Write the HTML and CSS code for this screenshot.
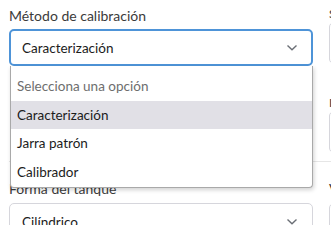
FILE: index.html
```html
<!DOCTYPE html>
<html lang="es">
<head>
  <meta charset="UTF-8">
  <meta name="viewport" content="width=device-width, initial-scale=1.0">
  <title>Calibración de tanque</title>
  <link rel="stylesheet" href="styles.css">
</head>
<body>
  <div class="form">
    <!-- Método -->
    <div class="form-row first">
      <div class="field">
        <label class="field-label">Método de calibración</label>
        <div class="select focused">
          <span class="select-value">Caracterización</span>
          <svg class="chevron" width="12" height="8" viewBox="0 0 12 8"><path d="M1.5 1.5 L6 5.8 L10.5 1.5" fill="none" stroke="#6b6f76" stroke-width="1.4"/></svg>
        </div>
        <ul class="dropdown">
          <li class="option placeholder">Selecciona una opción</li>
          <li class="option selected">Caracterización</li>
          <li class="option">Jarra patrón</li>
          <li class="option">Calibrador</li>
        </ul>
      </div>
      <div class="side">
        <div class="field small">
          <label class="field-label">Sensor de nivel</label>
          <div class="select tall"><span class="select-value">Radar</span></div>
        </div>
        <div class="field small lower">
          <label class="field-label">Incertidumbre</label>
          <div class="select tall"><span class="select-value">0.5 %</span></div>
        </div>
      </div>
    </div>

    <!-- Tanque -->
    <div class="form-row">
      <div class="field">
        <label class="field-label">Forma del tanque</label>
        <div class="select">
          <span class="select-value">Cilíndrico</span>
          <svg class="chevron" width="12" height="8" viewBox="0 0 12 8"><path d="M1.5 1.5 L6 5.8 L10.5 1.5" fill="none" stroke="#6b6f76" stroke-width="1.4"/></svg>
        </div>
      </div>
      <div class="field">
        <label class="field-label">Volumen nominal</label>
        <div class="select"><span class="select-value">10000 L</span></div>
      </div>
    </div>
  </div>
</body>
</html>
```

FILE: styles.css
```css
body {
  margin: 0;
  padding: 0;
  background-color: #ffffff;
  font-family: Lato, "Open Sans", Arial, sans-serif;
  font-size: 13.5px;
  color: #1f1f1f;
  overflow: hidden;
}

.form {
  padding: 6px 0 0 9px;
  width: 700px;
}

.form-row {
  display: grid;
  grid-template-columns: 304px 304px;
  gap: 16px;
}

.form-row.first {
  padding-bottom: 8px;
  border-bottom: 1px solid #e6e6e6;
  margin-bottom: 17px;
}

.field {
  position: relative;
  display: flex;
  flex-direction: column;
}

.field-label {
  font-size: 14px;
  line-height: 20px;
  color: #3b3b3b;
  margin-bottom: 3px;
}

.form-row:not(.first) .field-label {
  margin-bottom: 4px;
}

.select {
  height: 37px;
  box-sizing: border-box;
  border: 1px solid #d6d6dc;
  border-radius: 5px;
  display: flex;
  align-items: center;
  justify-content: space-between;
  padding: 0 14px 0 12px;
  background: #fff;
}

.select.focused {
  border: 2px solid #4e94d8;
  padding: 0 13px 0 11px;
}

.select-value {
  font-size: 13.5px;
  color: #1c1c1c;
}

.chevron {
  display: block;
  margin-top: 1px;
}

.dropdown {
  position: absolute;
  top: 60px;
  left: 1px;
  width: 303px;
  box-sizing: border-box;
  margin: 0;
  padding: 6px 0 1px;
  list-style: none;
  background: #fff;
  border: 1px solid #a9a9a9;
  border-top: none;
  border-radius: 0 0 4px 4px;
  box-shadow: 1px 2px 4px rgba(0, 0, 0, 0.18);
  z-index: 5;
}

.option {
  height: 28.6px;
  line-height: 28.6px;
  padding-left: 6px;
  font-size: 13.5px;
  color: #1c1c1c;
}

.option.placeholder {
  color: #6e6e6e;
}

.option.selected {
  background-color: #e1e0e6;
}

.side {
  display: flex;
  flex-direction: column;
}

.field.small .field-label {
  font-size: 12px;
  line-height: 16px;
  margin-bottom: 0;
}

.field.lower {
  margin-top: 31px;
}

.select.tall {
  height: 42px;
}
```
